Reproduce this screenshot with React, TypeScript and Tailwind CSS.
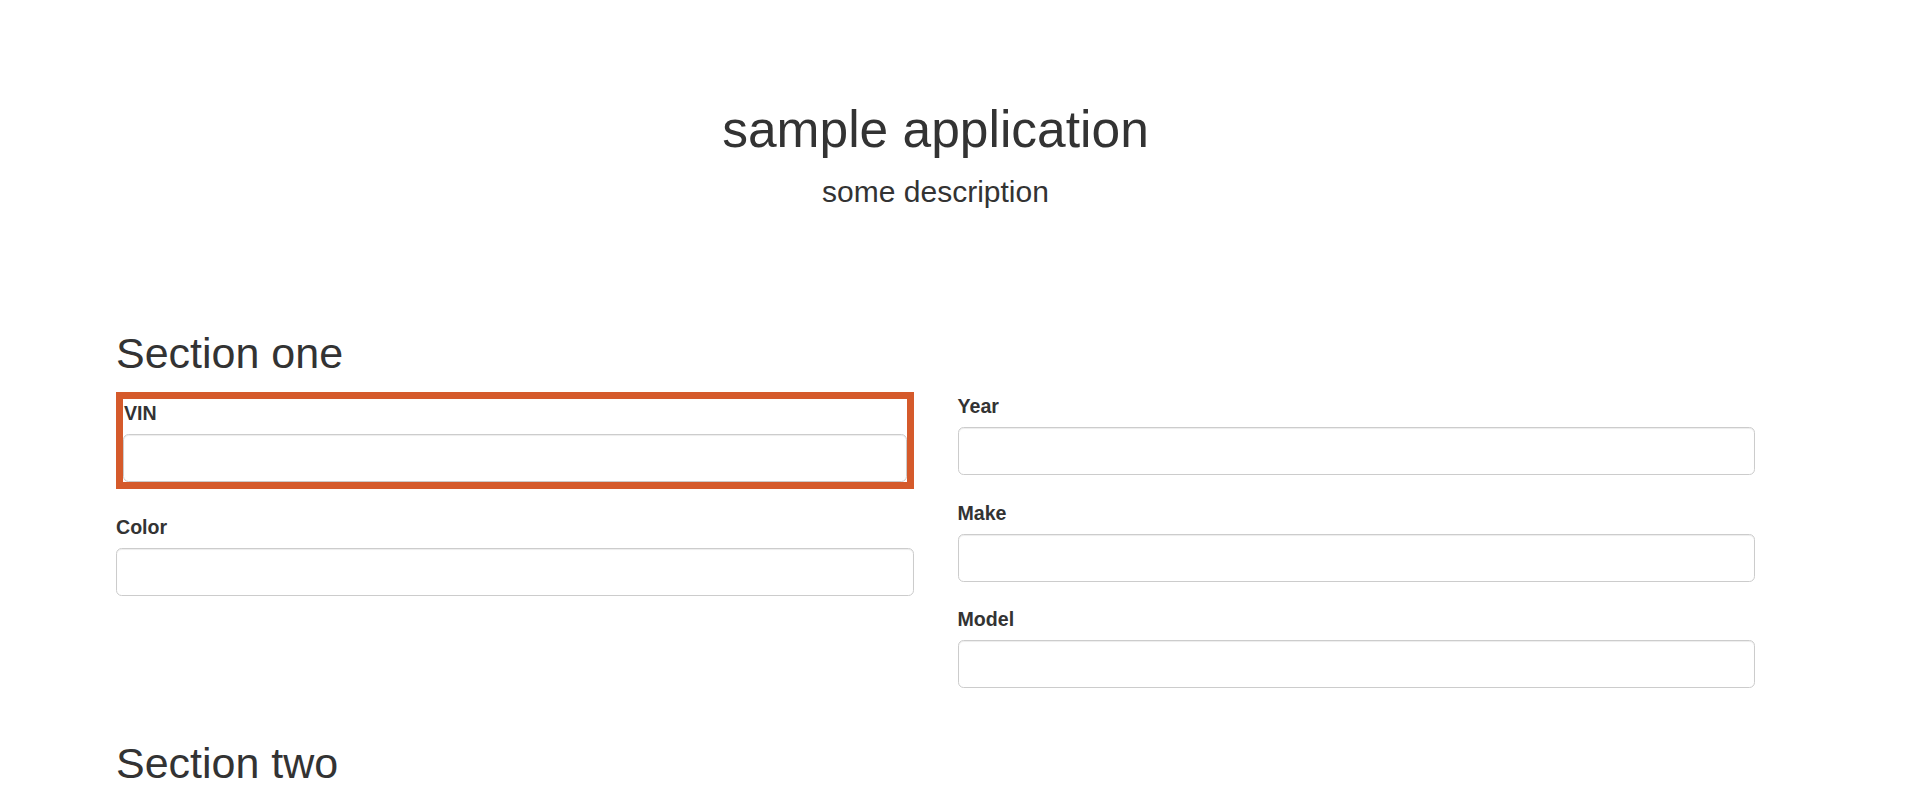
import React from "react";

function Field({ label }: { label: string }) {
  return (
    <div className="mb-[23.5px]">
      <label className="block mb-[7px] text-[19.6px] leading-[28px] font-bold text-[#333]">{label}</label>
      <input
        type="text"
        className="block w-full h-[48px] bg-white border border-[#ccc] rounded-[5.6px] shadow-[inset_0_1px_1px_rgba(0,0,0,0.075)] outline-none"
      />
    </div>
  );
}

export default function App() {
  return (
    <div className="min-h-screen bg-white text-[#333] font-['Liberation_Sans',Arial,sans-serif]">
      <div className="pl-[116px] pr-[165px] pt-[102px]">
        <div className="text-center">
          <h1 className="text-[51.5px] leading-[55px] font-normal">sample application</h1>
          <p className="mt-[14px] text-[30px] leading-[42px]">some description</p>
        </div>
        <h2 className="mt-[117px] text-[43px] leading-[46px] font-normal">Section one</h2>
        <div className="mt-[16px] grid grid-cols-2 gap-x-[44px] items-start">
          <div>
            <div className="mb-[23.5px] border-[7px] border-[#d55a2b]">
              <label className="block mb-[7px] pl-[1px] text-[19.6px] leading-[28px] font-bold text-[#333]">VIN</label>
              <input
                type="text"
                className="block w-full h-[48px] bg-white border border-[#ccc] rounded-[5.6px] shadow-[inset_0_1px_1px_rgba(0,0,0,0.075)] outline-none"
              />
            </div>
            <Field label="Color" />
          </div>
          <div>
            <Field label="Year" />
            <Field label="Make" />
            <Field label="Model" />
          </div>
        </div>
        <h2 className="mt-[28px] text-[43px] leading-[46px] font-normal">Section two</h2>
      </div>
    </div>
  );
}
